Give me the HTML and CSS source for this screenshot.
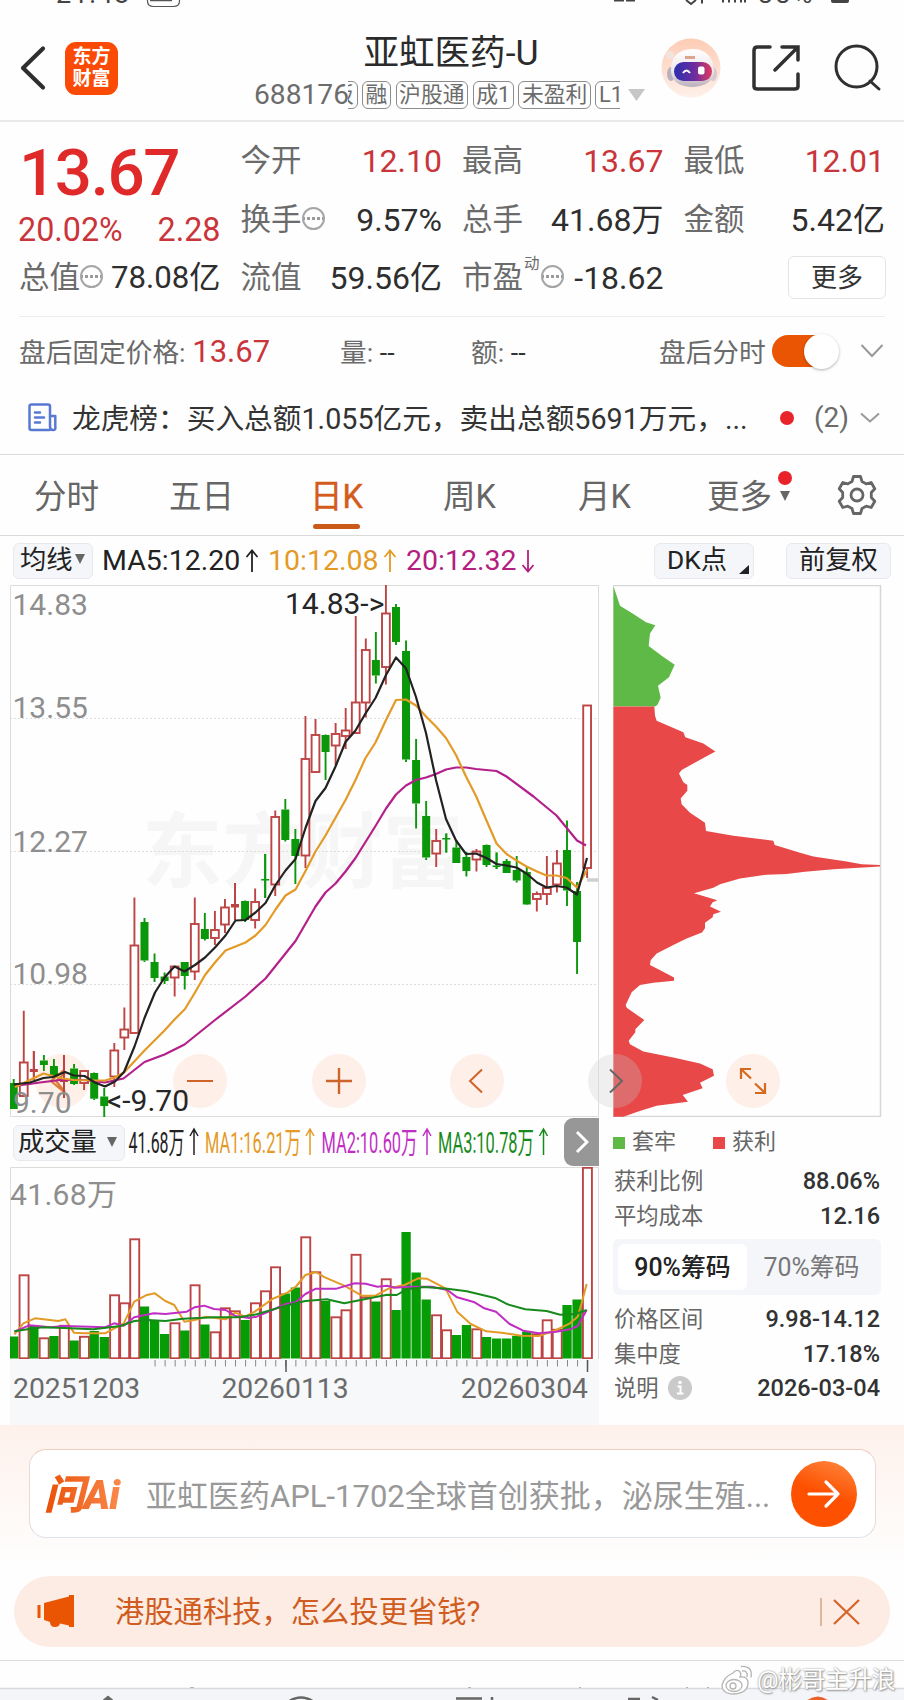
FILE: index.html
```html
<!DOCTYPE html>
<html lang="zh-CN">
<head>
<meta charset="utf-8">
<title>亚虹医药-U</title>
<link rel="stylesheet" href="styles.css">
</head>
<body>
<div class="status">
  <span class="clock">21:48</span>
  <svg width="904" height="8" viewBox="0 0 904 8"><g fill="none" stroke="#555" stroke-width="1.2"><path d="M147.500 -4V1q0 5.500 6 5.500h20q6 0 6-5.500v-5M150 .6h22"/></g><g fill="none" stroke="#444" stroke-width="2"><path d="M614 .5h10M626 .5h9M686 0l5 4 5-4M702 -2v5.500M723 -2v4.500M729 -2v4.500M735 -2v4.500M741 -2v4.500M745 -2v4.500"/></g><path d="M831-3h18v4q0 2-2 2h-14q-2 0-2-2z" fill="#444"/></svg>
  <span class="battery">88%</span>
</div>

<header class="header">
  <svg class="back" width="26" height="46" viewBox="0 0 26 46"><path d="M23 3.500L3 23l20 19.500" fill="none" stroke="#2f2f2f" stroke-width="4.200" stroke-linecap="round" stroke-linejoin="round"/></svg>
  <div class="logo"><span>东方</span><span>财富</span></div>
  <div class="title">
    <h1>亚虹医药-U</h1>
    <div class="sub">
      <span class="code">688176</span>
      <div class="tags"><i class="tag cut">板</i><i class="tag">融</i><i class="tag">沪股通</i><i class="tag">成1</i><i class="tag">未盈利</i><i class="tag">L1</i></div>
      <svg width="17" height="12" viewBox="0 0 17 12"><path d="M0 0h17L8.500 12z" fill="#c6c6c6"/></svg>
    </div>
  </div>
  <svg class="robot" width="60" height="60" viewBox="0 0 60 60">
    <defs>
      <linearGradient id="peach" x1="0" y1="0" x2="0" y2="1"><stop offset="0" stop-color="#fdccb5"/><stop offset="1" stop-color="#fef0e9"/></linearGradient>
      <linearGradient id="visor"><stop offset="0" stop-color="#2b2fae"/><stop offset=".55" stop-color="#6d2d9f"/><stop offset="1" stop-color="#e23a5c"/></linearGradient>
      <linearGradient id="helmet" x1="0" y1="0" x2="0" y2="1"><stop offset="0" stop-color="#fff"/><stop offset=".6" stop-color="#eee6ea"/><stop offset="1" stop-color="#b9aebb"/></linearGradient>
    </defs>
    <circle cx="30" cy="30" r="29.500" fill="url(#peach)"/>
    <circle cx="9" cy="17" r="4" fill="#f3e3de"/><ellipse cx="10" cy="36" rx="4" ry="7" fill="#b9b1be"/><ellipse cx="52" cy="36" rx="4" ry="7" fill="#d5c9d2"/>
    <path d="M10 32Q10 12 31 11q20 0 22 21 0 16-22 17-21-1-21-17z" fill="url(#helmet)"/>
    <path d="M24 19.500h10" stroke="#dfa58c" stroke-width="3"/>
    <rect x="13" y="24" width="38" height="19" rx="9.500" fill="url(#visor)"/>
    <path d="M22 35q3.500-5 7 0" fill="none" stroke="#fff" stroke-width="2"/><rect x="37" y="28.500" width="6.500" height="8" rx="2" fill="#fff"/>
  </svg>
  <svg class="share" width="48" height="48" viewBox="0 0 48 48"><g fill="none" stroke="#303030" stroke-width="3.500" stroke-linecap="round"><path d="M18 3H5.500Q2 3 2 6.500v36Q2 45 5.500 45h37q3.500 0 3.500-2.500V30M30 3h16v13M45 4L23 26"/></g></svg>
  <svg class="search" width="48" height="48" viewBox="0 0 48 48"><g fill="none" stroke="#303030" stroke-width="3" stroke-linecap="round"><circle cx="22.500" cy="22.500" r="20.500"/><path d="M36 37l9 8"/></g></svg>
</header>

<section class="quote">
  <div class="col first">
    <div class="price">13.67</div>
    <div class="chg"><b>20.02%</b><b>2.28</b></div>
    <div class="cell"><span>总值<i class="dots"></i></span><b class="tight">78.08亿</b></div>
  </div>
  <div class="col">
    <div class="cell"><span>今开</span><b class="up">12.10</b></div>
    <div class="cell"><span>换手<i class="dots"></i></span><b>9.57%</b></div>
    <div class="cell"><span>流值</span><b>59.56亿</b></div>
  </div>
  <div class="col">
    <div class="cell"><span>最高</span><b class="up">13.67</b></div>
    <div class="cell"><span>总手</span><b>41.68万</b></div>
    <div class="cell"><span>市盈<sup>动</sup><i class="dots"></i></span><b>-18.62</b></div>
  </div>
  <div class="col last">
    <div class="cell"><span>最低</span><b class="up">12.01</b></div>
    <div class="cell"><span>金额</span><b>5.42亿</b></div>
    <button class="more">更多</button>
  </div>
</section>

<section class="after">
  <span class="fixed">盘后固定价格: <b>13.67</b></span>
  <span class="amt">量: <i>--</i></span>
  <span class="amt2">额: <i>--</i></span>
  <span class="aftertime">盘后分时</span>
  <span class="toggle"><i></i></span>
  <svg width="24" height="14" viewBox="0 0 24 14"><path d="M1.500 1L12 12 22.500 1" fill="none" stroke="#999" stroke-width="2"/></svg>
</section>

<section class="news">
  <svg class="doc" width="29" height="29" viewBox="0 0 29 29"><g fill="none" stroke="#5878d4" stroke-width="2.500" stroke-linejoin="round" stroke-linecap="round"><path d="M21.500 27H3.500Q1.500 27 1.500 25V3.500Q1.500 1.500 3.500 1.500H20Q22 1.500 22 3.500V23.500Q22 27 25 27T27.300 24V13H22M7 9.500h5M7 14.500h9M7 19.500h5"/></g></svg>
  <span class="headline">龙虎榜：买入总额1.055亿元，卖出总额5691万元，...</span>
  <i class="dot"></i><span class="count">(2)</span>
  <svg width="20" height="12" viewBox="0 0 20 12"><path d="M1 1.500l9 8 9-8" fill="none" stroke="#999" stroke-width="2"/></svg>
</section>

<nav class="tabs">
  <span>分时</span><span>五日</span><span class="on">日K</span><span>周K</span><span>月K</span><span class="moretab">更多<i class="dot"></i><i class="tri"></i></span>
  <svg class="gear" width="42" height="42" viewBox="0 0 42 42"><g fill="none" stroke="#666" stroke-width="2.800" stroke-linejoin="round"><path d="M17.500 2.500h7l1.500 5 4.200 2.400 5-1.400 3.600 6.200-3.500 3.800v5l3.500 3.800-3.600 6.200-5-1.400-4.200 2.400-1.500 5h-7l-1.500-5-4.200-2.400-5 1.400-3.600-6.200 3.500-3.800v-5L3.200 14.700l3.600-6.200 5 1.400L16 7.500z"/><circle cx="21" cy="21" r="6"/></g></svg>
</nav>

<section class="mabar">
  <span class="chip avg">均线<i class="tri"></i></span>
  <span class="ma ma5">MA5:12.20</span><svg class="arr" width="14" height="24" viewBox="0 0 14 24"><path d="M7 23V1.500M1.500 8L7 1.500 12.500 8" fill="none" stroke="#222" stroke-width="1.800"/></svg>
  <span class="ma ma10">10:12.08</span><svg class="arr" width="14" height="24" viewBox="0 0 14 24"><path d="M7 23V1.500M1.500 8L7 1.500 12.500 8" fill="none" stroke="#e39a26" stroke-width="1.800"/></svg>
  <span class="ma ma20">20:12.32</span><svg class="arr" width="14" height="24" viewBox="0 0 14 24"><path d="M7 1v21.500M1.500 16L7 22.500l5.500-6.500" fill="none" stroke="#b3207f" stroke-width="1.800"/></svg>
  <span class="chip dk">DK点<i></i></span>
  <span class="chip fq">前复权</span>
</section>

<main class="board">
  <div class="left">
    <svg class="kline" width="589" height="532" viewBox="10 585 589 532">
      <text class="wm" x="142" y="881" textLength="321" lengthAdjust="spacingAndGlyphs">东方财富</text>
      <path d="M10 718.500H598M10 851.500H598M10 984.500H598" stroke="#ddd" stroke-width="1" stroke-dasharray="2 2"/>
      <path d="M10.500 585.500H598.500V1116.500H10.500z" fill="none" stroke="#dcdcdc"/>
      <path d="M587 880h11" stroke="#cfcfd2" stroke-width="3.500"/>
      <g id="candles"></g>
      <g class="axis"><text x="12.500" y="615">14.83</text><text x="12.500" y="718">13.55</text><text x="12.500" y="851.500">12.27</text><text x="12.500" y="983.500">10.98</text><text x="13" y="1113">9.70</text></g>
      <g fill="none" stroke-width="2.200" stroke-linejoin="round">
        <polyline stroke="#b4208a" points="15,1086 40,1082.500 60,1080 84,1080 105,1082.500 123.500,1078.500 144.500,1062 164.500,1054.500 184.500,1044.500 215,1020 245.500,996.500 265.500,978.500 295.500,941 315.500,906.500 325.500,892.500 335.500,883.500 345.500,871.500 355.500,858 375.500,826 386,808.500 396,794.500 406,785.500 416,780 426,777.500 436,774 446,769.500 456,767.500 466,767.500 476,769 496.500,771 506.500,776.500 533.500,796.500 556.500,815.500 577,840.500 586,845.500"/>
        <polyline stroke="#e39a26" points="15,1087 30,1080 43.500,1073.500 53,1076 63,1078.500 74,1080 95,1080.500 105,1080.500 115,1077.500 124,1072.500 144.500,1050.500 164.500,1030.500 174.500,1019.500 185,1009 195,992.500 205,975 215,962.500 225.500,950.500 235.500,946.500 245.500,942.500 255.500,935.500 265.500,925 275.500,909.500 285.500,895.500 295.500,889.500 305.500,871 315.500,851.500 325.500,835.500 345.500,800 355.500,780 365.500,758 375.500,742.500 386,720 396,700 406,699.500 416,705.500 426,716.500 436,726.500 446,738 456,755 466,776.500 476,796 486.500,820.500 496.500,843.500 506.500,854 516.500,860.500 526.500,866.500 537,871.500 546.500,875.500 556.500,875.500 566.500,878 577,887.500 587,870"/>
        <polyline stroke="#222" points="13.700,1084.500 30,1082.500 43.500,1078 53,1077 65,1072 74,1075.500 84.500,1076 95,1082.500 105,1086.500 115,1081.500 124,1072 134.500,1046.500 144.500,1018 155,992.500 164.500,977.500 174.500,966.500 184.500,971.500 195,965 205,957.500 215,947.500 225.500,935.500 235.500,920.500 245.500,920 255.500,912.500 265.500,903 275.500,885 285.500,870.500 295.500,859 305.500,828 315.500,801 325.500,788 335.500,766.500 345.500,742 355.500,730.500 365.500,713.500 375.500,698 386,675 396,657.500 406,668.500 416,697 426,733 436,780 446,819 456,840.500 466,854 476,853.500 486.500,858 496.500,864 506.500,865.500 516.500,867.500 526.500,873.500 537,882.500 546.500,887.500 556.500,886 566.500,887.500 577,894.500 587,858"/>
      </g>
      <g class="mark"><text x="285" y="613.500">14.83-&gt;</text><text x="107" y="1110.500">&lt;-9.70</text></g>
    </svg>
    <div class="volbar">
      <span class="chip vol">成交量<i class="tri"></i></span>
      <svg width="425" height="40" viewBox="126 1122 425 40">
        <g class="cond"><text x="128.500" y="1153" textLength="56" lengthAdjust="spacingAndGlyphs" fill="#222">41.68万</text><text x="205" y="1153" textLength="96" lengthAdjust="spacingAndGlyphs" fill="#e39a26">MA1:16.21万</text><text x="321.500" y="1153" textLength="96" lengthAdjust="spacingAndGlyphs" fill="#c02fc4">MA2:10.60万</text><text x="438" y="1153" textLength="96" lengthAdjust="spacingAndGlyphs" fill="#178a1c">MA3:10.78万</text></g>
        <g fill="none" stroke-width="1.500"><path stroke="#222" d="M194 1155v-26M190 1136l4-7 4 7"/><path stroke="#e39a26" d="M310 1155v-26M306 1136l4-7 4 7"/><path stroke="#c02fc4" d="M427 1155v-26M423 1136l4-7 4 7"/><path stroke="#178a1c" d="M543.500 1155v-26M539.500 1136l4-7 4 7"/></g>
      </svg>
      <span class="next"><svg width="14" height="24" viewBox="0 0 14 24"><path d="M2 2l10 10L2 22" fill="none" stroke="#fff" stroke-width="3"/></svg></span>
    </div>
    <svg class="volume" width="589" height="192" viewBox="10 1167 589 192">
      <path d="M10.500 1359V1167.500H598.500V1359" fill="none" stroke="#dcdcdc"/>
      <text class="axis" x="10" y="1204.500" textLength="107">41.68万</text>
      <g id="volumes"></g>
      <g fill="none" stroke-width="2" stroke-linejoin="round" transform="translate(0 1120) scale(.38903 .33333)">
        <polyline stroke="#e39a26" points="37,643 60,610 90,595 150,603 168,598 190,638 215,640 270,640 318,610 345,545 375,526 398,520 425,543 448,555 474,605 500,600 530,590 580,598 605,578 630,590 655,575 700,537 740,517 762,498 785,465 812,456 835,472 885,497 930,527 965,527 1000,505 1040,495 1075,475 1097,476 1145,505 1175,575 1210,612 1250,634 1290,638 1340,647 1385,648 1430,630 1465,610 1485,590 1495,550 1508,492"/>
        <polyline stroke="#c02fc4" points="37,635 75,616 130,622 165,618 230,620 270,622 293,610 318,617 345,592 395,580 425,582 480,575 500,562 525,557 550,567 580,570 605,588 640,594 660,590 700,570 735,552 760,547 785,522 812,506 865,506 912,490 940,491 970,500 995,497 1015,503 1050,500 1110,500 1150,510 1175,532 1220,547 1245,565 1275,575 1310,612 1345,632 1385,640 1430,635 1465,628 1485,618 1508,570"/>
        <polyline stroke="#178a1c" points="37,634 75,627 110,622 165,624 240,628 310,618 345,603 380,600 425,603 470,596 550,592 615,592 660,583 735,557 760,550 785,543 840,538 885,550 940,537 995,524 1020,525 1045,508 1090,501 1150,506 1200,514 1275,535 1305,553 1350,568 1405,573 1440,584 1480,582 1508,570"/>
      </g>
    </svg>
    <div class="dates">
      <svg width="589" height="14" viewBox="10 1359 589 14"><g id="ticks"></g><path d="M286 1360v12M587.500 1360v12" stroke="#555" stroke-width="1.500"/></svg>
      <div><span>20251203</span><span class="mid">20260113</span><span>20260304</span></div>
    </div>
  </div>

  <aside class="right">
    <svg class="profile" width="269" height="532" viewBox="613 585 269 532">
      <path d="M613 585.500H880.500V1116.500H613" fill="none" stroke="#d6d6d6" stroke-width="1.500"/>
      <g transform="translate(600 580) scale(.33333 .35714)">
        <path fill="#5fb946" d="M40 16L60 72 100 95 138 118 166 127 150 150 146 185 185 212 224 237 207 272 174 296 182 330 172 350 165 354H40z"/>
        <path fill="#e84848" d="M40 354H163L165 380 170 394 250 426 256 440 310 458 346 480 295 506 245 532 237 542 250 566 262 574 262 590 242 612 245 628 270 652 315 680 318 703 400 716 520 730 524 742 600 764 640 774 740 788 785 796 840 798V802L700 810 615 817 560 823 500 825 420 836 360 852 340 862 282 877 352 897 338 902 330 914 363 929 340 936 338 944 315 960 315 975 306 987 260 1004 220 1022 170 1046 152 1065 150 1078 185 1095 222 1113V1122L160 1128 120 1134 95 1154 77 1190 80 1198 133 1232 106 1258 106 1266 86 1290 90 1300 130 1320 220 1337 300 1354 338 1370 342 1388 300 1408 308 1423 248 1442 264 1461 170 1472 115 1488 70 1503H40z"/>
      </g>
    </svg>
    <div class="legend"><span><i class="g"></i>套牢</span><span><i class="r"></i>获利</span></div>
    <div class="stat"><span>获利比例</span><b>88.06%</b></div>
    <div class="stat"><span>平均成本</span><b>12.16</b></div>
    <div class="seg"><span class="sel">90%筹码</span><span>70%筹码</span></div>
    <div class="stat"><span>价格区间</span><b>9.98-14.12</b></div>
    <div class="stat"><span>集中度</span><b>17.18%</b></div>
    <div class="stat"><span>说明<svg width="24" height="24" viewBox="0 0 24 24"><circle cx="12" cy="12" r="12" fill="#cacaca"/><path d="M9.500 10.500H12.500V17M9 17.500h6.500" fill="none" stroke="#fff" stroke-width="2"/><circle cx="12" cy="6.500" r="1.700" fill="#fff"/></svg></span><b>2026-03-04</b></div>
  </aside>

  <div class="tools">
    <span class="rewind"><svg width="30" height="30" viewBox="0 0 30 30"><path d="M17 4L4 15l13 11M18 7L9 15l9 11" fill="none" stroke="#dc7a33" stroke-width="2.200"/></svg></span>
    <span><svg width="30" height="30" viewBox="0 0 30 30"><path d="M2 15h26" stroke="#cf642b" stroke-width="2"/></svg></span>
    <span><svg width="30" height="30" viewBox="0 0 30 30"><path d="M2 15h26M15 2v26" stroke="#cf642b" stroke-width="2.400"/></svg></span>
    <span><svg width="30" height="30" viewBox="0 0 30 30"><path d="M20 3.500L8 15l12 11.500" fill="none" stroke="#cf642b" stroke-width="2"/></svg></span>
    <span class="gray"><svg width="30" height="30" viewBox="0 0 30 30"><path d="M10 3.500L22 15 10 26.500" fill="none" stroke="#666" stroke-width="2"/></svg></span>
    <span><svg width="30" height="30" viewBox="0 0 30 30"><path d="M3 13V3h10M3.500 3.500L13 12.500M27 17v10H17M26.500 26.500L17 17.500" fill="none" stroke="#d7691f" stroke-width="2.200"/></svg></span>
  </div>
</main>

<section class="ai">
  <div class="ask">
    <span class="asklogo">问Ai</span>
    <span class="q">亚虹医药APL-1702全球首创获批，泌尿生殖...</span>
    <span class="go"><svg width="34" height="30" viewBox="0 0 34 30"><path d="M2 15h29M19 3l12 12-12 12" fill="none" stroke="#fff" stroke-width="3.200" stroke-linecap="round" stroke-linejoin="round"/></svg></span>
  </div>
  <div class="banner">
    <svg width="37" height="34" viewBox="0 0 37 34"><path d="M7 8L32 1.500V0h5v32h-5v-1.500L23 28.500q-1 3.500-5 3.500-5 0-5-5L7 25z" fill="#ea5504"/><path d="M2 10v13" stroke="#ea5504" stroke-width="3"/></svg>
    <span>港股通科技，怎么投更省钱?</span>
    <svg class="close" width="42" height="32" viewBox="0 0 42 32"><path d="M2 2v28" stroke="#d9a284" stroke-width="1.500"/><path d="M15 4l25 24M40 4L15 28" stroke="#d9642c" stroke-width="2.300"/></svg>
  </div>
</section>

<footer class="foot">
  <svg class="bar" width="904" height="13" viewBox="0 0 904 13"><path d="M0 2h904v11H0z" fill="#f4f5f8"/><path d="M0 1.500h904" stroke="#d8dade" stroke-width="1.500"/><path d="M190 0h4M468 0h3M579 0h2M686 0h2M707 0h2" stroke="#777" stroke-width="1"/><path d="M102 14l6-5 6 5" fill="#666" stroke="#666"/><path d="M288 15q13-9 26 0" fill="none" stroke="#666" stroke-width="2.500"/><path d="M456 11.500h26M492 10v3M628 12h12M652 10l6 3" fill="none" stroke="#666" stroke-width="2.500"/><path d="M806 14q12-9 23 0z" fill="#e8602a"/></svg>
  <div class="weibo"><svg width="34" height="30" viewBox="0 0 34 30"><g fill="#fff" stroke="#b5b5b5" stroke-width="1.300"><path d="M13 8Q16 4 19 6t1 6q8-1 8 6 0 10-14 11Q2 29 2 20 4 12 13 8z"/><ellipse cx="14" cy="20.500" rx="8" ry="6"/><circle cx="13" cy="21" r="3"/><path d="M22 6q6-1 5 6M21 1.500q12-1 10 11" fill="none"/></g></svg><span>@彬哥主升浪</span></div>
</footer>
<script src="chart.js"></script>
</body>
</html>
```
FILE: styles.css
```css
* { box-sizing: border-box; }
body { margin: 0; width: 904px; height: 1700px; overflow: hidden; background: #fefefe; color: #333; font-family: Roboto, "Noto Sans CJK SC", sans-serif; }
svg { display: block; flex: none; }
i { font-style: normal; }
b { font-weight: 400; }
span, b { white-space: nowrap; }

.status { position: relative; height: 8px; overflow: hidden; color: #444; }
.clock, .battery { position: absolute; top: -20px; font-size: 27px; line-height: 28px; letter-spacing: 1.5px; }
.clock { left: 56px; }
.battery { left: 758px; font-size: 26px; letter-spacing: 3px; }

.header { display: flex; height: 114px; padding-left: 20px; border-bottom: 2px solid #e9e9e9; }
.back { margin-top: 37px; }
.logo { width: 53px; height: 53px; margin: 34px 0 0 19px; padding-top: 4px; border-radius: 11px; background: #fb4a06; color: #fff; font-size: 19px; font-weight: 700; line-height: 21.5px; display: flex; flex-direction: column; align-items: center; }
.title { width: 393px; margin-left: 136px; }
.title h1 { margin: 20px 0 0 1px; text-align: center; width: 392px; font-size: 35.6px; font-weight: 400; line-height: 50px; color: #2b2b2b; }
.sub { display: flex; align-items: center; height: 32px; margin-top: 1px; }
.code { width: 94px; font-size: 28.2px; color: #6c6c6c; line-height: 32px; }
.tags { display: flex; gap: 4.500px; width: 272px; margin-right: 8px; overflow: hidden; }
.tag { flex: none; height: 28px; padding: 0 2.600px; border: 1px solid #8c8c8c; border-radius: 6px; font-size: 21.800px; line-height: 26px; color: #6c6c6c; }
.tag.cut { margin-left: -19.500px; }
.robot { margin: 30px 0 0 14px; }
.share { margin: 36px 0 0 31px; }
.search { margin: 36px 0 0 34px; }

.quote { display: flex; gap: 20px; height: 193px; padding: 10px 19px 0 19px; }
.col { width: 201.500px; display: flex; flex-direction: column; }
.cell { display: flex; justify-content: space-between; height: 58.600px; line-height: 58.600px; }
.cell span { display: flex; align-items: center; font-size: 30.500px; color: #6b6b6b; }
.cell b { font-size: 32px; color: #2e2e2e; }
.cell .tight { font-size: 31.200px; }
.cell .up, .chg b { color: #c9353a; }
.price { height: 80px; line-height: 82px; font-size: 65.500px; letter-spacing: -1.400px; font-weight: 500; color: #e02a2a; }
.chg { display: flex; justify-content: space-between; height: 37px; line-height: 36px; margin-left: -1px; font-size: 32.300px; }
.dots { width: 23px; height: 23px; margin-bottom: 3px; border: 2px solid #a5a5a5; border-radius: 50%; background: radial-gradient(circle, #999 1.4px, transparent 2px) 2px 0 / 5px 19px repeat-x; }
.cell sup { font-size: 15.500px; line-height: 20px; align-self: flex-start; margin: 5px 1px 0 1px; }
.more { margin: 7px -1px 0 0; align-self: flex-end; width: 98px; height: 43px; padding: 0; border: 1.5px solid #e4e4e4; border-radius: 6px; background: #fff; font: 26px/38px Roboto, "Noto Sans CJK SC", sans-serif; color: #333; }

.after { display: flex; align-items: center; height: 68px; margin: 1px 19px 0; border-top: 1px solid #ececec; font-size: 26.700px; color: #6b6b6b; }
.after b { font-size: 31px; color: #c9353a; }
.fixed { width: 321px; }
.amt { width: 131px; }
.amt2 { width: 188px; }
.after i { color: #333; }
.aftertime { width: 113px; }
.after .toggle { position: relative; width: 67px; height: 32px; margin-right: 21px; }
.toggle::before { content: ""; position: absolute; inset: 0 10px 0 0; border-radius: 16px; background: #ea5504; }
.toggle i { position: absolute; right: 0; top: -1px; width: 35px; height: 35px; border-radius: 50%; background: #fff; box-shadow: 0 1px 3px rgba(0,0,0,.3); }

.news { display: flex; align-items: center; height: 71px; padding: 0 0 3px 28px; border-bottom: 1px solid #dadada; }
.headline { width: 708px; margin: -2px 0 0 15px; font-size: 28.700px; color: #333; }
.dot { flex: none; width: 14px; height: 14px; border-radius: 50%; background: #e8242a; }
.news .dot { margin: 0 20px 0 0; }
.count { width: 46px; font-size: 28px; color: #6b6b6b; }

.tabs { display: flex; height: 81px; border-bottom: 1px solid #dadada; padding-left: 34px; font-size: 32.500px; line-height: 85px; color: #666; }
.tabs span { position: relative; width: 135px; }
.tabs span:nth-child(2) { width: 141px; }
.tabs span:nth-child(3) { width: 133px; }
.tabs span:nth-child(4) { width: 135px; }
.tabs span:nth-child(5) { width: 129px; }
.tabs .on { color: #d35c1c; -webkit-text-stroke: .4px #d35c1c; }
.on::after { content: ""; position: absolute; left: 3px; bottom: 6px; width: 47px; height: 5px; border-radius: 3px; background: #cb5a18; }
.moretab .dot { position: absolute; left: 71px; top: 16px; }
.moretab .tri { position: absolute; left: 73px; top: 36px; }
.tri { display: inline-block; border: 5.5px solid transparent; border-top: 10px solid #666; border-bottom: 0; }
.gear { margin: 19px 0 0 -6px; }

.mabar { display: flex; align-items: center; height: 49px; padding-left: 13px; }
.chip { height: 36px; border: 1.5px solid #e7e9ee; border-radius: 6px; background: #f5f6fa; font-size: 26.300px; line-height: 33px; color: #222; }
.avg { width: 80px; padding-left: 6px; margin-right: 9px; }
.avg .tri { margin: 0 0 5px 2px; }
.ma { font-size: 28.500px; }
.ma5 { width: 143px; color: #222; }
.ma10 { width: 115px; color: #e39a26; }
.ma20 { width: 115px; color: #b3207f; }
.arr { margin-right: 9px; }
.arr + .dk { margin-left: 110px; }
.dk { position: relative; width: 100px; padding-left: 12px; }
.dk i { position: absolute; right: 4px; bottom: 4px; border-left: 10px solid transparent; border-bottom: 9px solid #222; }
.fq { width: 105px; margin-left: 32px; padding-left: 12px; }

.board { position: relative; display: flex; gap: 14px; height: 840px; padding-left: 10px; }
.left { width: 589px; }
.kline { position: relative; z-index: 1; }
.kline .axis text, text.axis { font-size: 30px; fill: #8e8e8e; }
.mark text { font-size: 30px; fill: #262626; }
.wm { font-size: 82px; font-weight: 700; fill: #f6f6f6; }
.volbar { display: flex; align-items: center; height: 50px; }
.vol { width: 112px; margin: 1px 1px 0 3px; padding-left: 4px; }
.vol .tri { margin: 0 0 4px 10px; }
.cond text { font-size: 30px; }
.volbar .next { display: flex; align-items: center; justify-content: center; width: 35px; height: 48px; margin-left: 13px; border-radius: 9px 0 0 9px; background: #979797; }
.dates { height: 66px; background: #f7f8fa; }
.dates div { display: flex; justify-content: space-between; padding: 0 11px 0 3px; font-size: 28.300px; line-height: 32px; color: #6b6b6b; }
.dates .mid { margin-right: 31px; }

.right { width: 268px; }
.legend { display: flex; gap: 37px; height: 47px; line-height: 50px; font-size: 22px; color: #666; }
.legend i { display: inline-block; width: 12px; height: 12px; margin-right: 7px; }
.g { background: #5fb946; }
.r { background: #e84848; }
.stat { display: flex; justify-content: space-between; height: 34.500px; padding: 0 1px 0 1px; line-height: 34.500px; font-size: 22.300px; color: #666; }
.stat b { font-size: 23.500px; font-weight: 500; color: #333; }
.stat span { display: flex; align-items: center; gap: 9px; }
.seg { display: flex; height: 56px; margin: 6px 0 7px; padding: 5px; border-radius: 6px; background: #f5f6fa; font-size: 24.900px; line-height: 47px; color: #777; text-align: center; }
.seg span { width: 129px; border-radius: 6px; }
.seg .sel { background: #fff; font-weight: 500; color: #222; }

.tools { position: absolute; left: 35px; top: 469px; display: flex; gap: 84.300px; }
.tools span { width: 54px; height: 54px; border-radius: 50%; background: rgba(253,228,216,.6); display: flex; align-items: center; justify-content: center; }
.tools .gray { background: rgba(200,200,205,.28); }

.ai { height: 236px; padding-top: 24px; background: linear-gradient(#fef1eb, #fefefe 60%); border-bottom: 1px solid #dcdcdc; }
.ask { display: flex; align-items: center; width: 847px; height: 89px; margin-left: 29px; padding-left: 14px; border: 1.5px solid; border-color: #efcdbf #ead9d6 #dfe5ee #ead9d6; border-radius: 17px; background: #fff; }
.asklogo { width: 102px; margin-top: -4px; font-size: 40.500px; font-weight: 900; font-style: italic; letter-spacing: -1px; background: linear-gradient(90deg, #ea5008, #fb8c50 80%); -webkit-background-clip: text; background-clip: text; color: transparent; }
.q { width: 645px; font-size: 31px; color: #999; }
.go { width: 66px; height: 66px; border-radius: 50%; background: linear-gradient(20deg, #fd5000 50%, #ff8a42); display: flex; align-items: center; justify-content: center; }
.banner { display: flex; align-items: center; width: 876px; height: 71px; margin: 38px 0 0 14px; padding-left: 23px; border-radius: 36px; background: #fcece3; font-size: 29.300px; color: #d05c22; }
.banner span { margin: -5px 0 0 41px; width: 704px; }

.foot { position: relative; height: 39px; display: flex; align-items: flex-end; }
.weibo { position: absolute; right: 9px; top: 1px; display: flex; align-items: center; font-size: 24px; line-height: 36px; color: #fff; text-shadow: 0 0 2px #888, 1px 1px 2px #999; }
.weibo span { margin-left: 3px; letter-spacing: -.6px; }
```
FILE: chart.js
```javascript
// Each row: colour, high, body top, body bottom, low, volume bar top, volume colour
const bars = [
  ['g',1079,1083,1109,1109,1336.5],['r',1010.7,1062,1096.5,1097,1274.5],['r',1051,1069,1072,1080,1325,'g'],['g',1055,1060.5,1065,1071,1337.5,'r'],
  ['g',1059,1066,1075,1078,1336],['r',1055,1079,1082,1098,1325],['g',1064,1068.5,1084,1085,1340.5],['r',1070.5,1070.5,1083.5,1090,1336],
  ['g',1072.5,1073,1098.7,1100,1331],['g',1088,1096.5,1106,1117,1337],['r',1043,1050,1077,1087,1294.5],['r',1007.5,1029,1038,1050,1302.5],
  ['r',897.5,945,1033.5,1034,1238.5],['g',918,922,960.5,962,1306.5],['g',953.5,962,978,982,1320.5],['g',972.5,976.5,981,984,1334],
  ['r',966,966,978,996.5,1322.5],['g',962,962,976,989.5,1330.5],['r',897.5,923.5,972,980,1284.5],['g',913,929,939,940.5,1324.5],
  ['r',911,929.5,938.5,945,1331.5],['r',899,907,925,933,1307.5],['r',883,904,907.5,920,1310.5],['g',900.5,901,920,922,1320],
  ['r',888.5,901.5,920.5,928.5,1302.5],['g',854,879,880.5,898,1290.5,'r'],['r',810.5,816.5,885,896,1266.5],['g',799,809.5,840,841.5,1293.5],
  ['g',829,839,856,884,1287.5],['r',716,758.5,856,868,1236.5],['r',719,734.5,772.5,773,1271.5],['g',734.5,735,752,780,1301],
  ['r',723,733.5,746,765,1316.5],['r',708,730,736.5,749,1309.5],['r',616,702,733.5,734,1254],['r',638.5,649.5,703,717.5,1296.5],
  ['g',632,660,675.5,683.5,1301.5],['r',585,613,667.5,684.5,1278.5],['g',604,607,642,645,1310],['g',640.5,651,759.5,762,1232],
  ['g',739,760,803.5,828.5,1272.5],['g',801,816,857.5,860,1299.5],['r',829,840.5,854,867,1314.5],['g',833.5,838,839.5,852.5,1329.5,'r'],
  ['g',840,847.5,863,863,1335],['g',852,857,871,876.5,1325],['r',849,851,860,871.5,1328.5],['g',844.5,845,865,867,1337],
  ['g',852.5,865.5,867,869,1338.5],['g',859,861,873,873,1338.5],['g',856,870,880.5,882.5,1336],['g',867,872,904.5,905,1331.5],
  ['r',891.5,893.5,899.5,911.5,1333.5],['r',856,887.5,894.5,905,1319.5],['r',850,863,885,892.5,1329],['g',820.5,850,890.5,906,1305],
  ['g',882,891,942,974,1299.5],['r',705,705,868.5,878,1167]
];
const GREEN = '#0a980a', RED = '#bd4444';
let candles = '', volumes = '', ticks = '';
bars.forEach(([c, high, top, bottom, low, v, vc], i) => {
  const x = 13.7 + i * 10.06;
  const color = c === 'g' ? GREEN : RED;
  const thin = bottom - top < 4;
  candles += `<path d="M${x} ${high}V${top}M${x} ${bottom}V${low}" stroke="${color}" stroke-width="1.9"/>`;
  candles += c === 'g' || thin
    ? `<rect x="${x - 4}" y="${top}" width="8" height="${Math.max(bottom - top, 1)}" fill="${color}"/>`
    : `<rect x="${x - 3.9}" y="${top + .5}" width="7.8" height="${bottom - top - 1}" fill="#fff" stroke="${color}" stroke-width="1.9"/>`;
  if (thin) candles += `<path d="M${x} ${high}V${low}" stroke="${color}" stroke-width="1.9"/>`;
  volumes += (vc || c) === 'g'
    ? `<rect x="${x - 4.6}" y="${v}" width="9.3" height="${1358.5 - v}" fill="#069c06"/>`
    : `<rect x="${x - 4.2}" y="${v + .8}" width="9" height="${1357.5 - v}" fill="#fff" stroke="${RED}" stroke-width="1.9"/>`;
  if (i > 13) ticks += `<path d="M${x + .5} 1360v6.500" stroke="#888"/>`;
});
document.getElementById('candles').innerHTML = candles;
document.getElementById('volumes').innerHTML = volumes;
document.getElementById('ticks').innerHTML = ticks;
document.querySelectorAll('.volume polyline').forEach(p => p.setAttribute('vector-effect', 'non-scaling-stroke'));
```
